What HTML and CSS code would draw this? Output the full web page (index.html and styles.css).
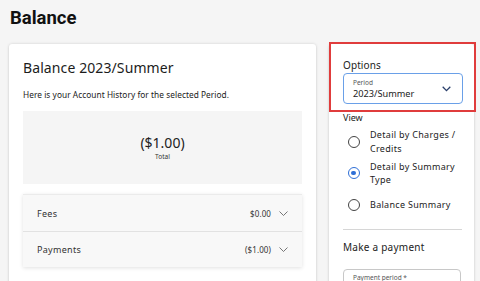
FILE: index.html
```html
<!DOCTYPE html>
<html>
<head>
<meta charset="utf-8">
<link rel="stylesheet" href="styles.css">
</head>
<body>
<h1 class="page-title">Balance</h1>
<div class="layout">
  <main class="card main-card">
    <h2 class="card-title">Balance 2023/Summer</h2>
    <p class="intro">Here is your Account History for the selected Period.</p>
    <div class="total-box">
      <div class="total-amount">($1.00)</div>
      <div class="total-label">Total</div>
    </div>
    <div class="accordion">
      <div class="acc-row">
        <span class="acc-name">Fees</span>
        <span class="acc-value">$0.00</span>
        <svg class="chev" width="9" height="5" viewBox="0 0 9 5"><path d="M0.5 0.5 L4.5 4.5 L8.5 0.5" fill="none" stroke="#666" stroke-width="0.9"/></svg>
      </div>
      <div class="acc-row">
        <span class="acc-name">Payments</span>
        <span class="acc-value">($1.00)</span>
        <svg class="chev" width="9" height="5" viewBox="0 0 9 5"><path d="M0.5 0.5 L4.5 4.5 L8.5 0.5" fill="none" stroke="#666" stroke-width="0.9"/></svg>
      </div>
    </div>
  </main>
  <aside class="card side-card">
    <section class="options">
      <h3 class="side-title">Options</h3>
      <div class="select">
        <div class="select-text">
          <span class="select-label">Period</span>
          <span class="select-value">2023/Summer</span>
        </div>
        <svg class="select-chev" width="9" height="6" viewBox="0 0 9 6"><path d="M0.7 0.8 L4.5 4.6 L8.3 0.8" fill="none" stroke="#2a3f6b" stroke-width="1.3"/></svg>
      </div>
    </section>
    <div class="view">
      <div class="view-label">View</div>
      <label class="radio-row"><span class="radio"></span><span class="radio-text">Detail by Charges / Credits</span></label>
      <label class="radio-row"><span class="radio checked"></span><span class="radio-text">Detail by Summary Type</span></label>
      <label class="radio-row"><span class="radio"></span><span class="radio-text">Balance Summary</span></label>
    </div>
    <hr class="divider">
    <h3 class="side-title pay-title">Make a payment</h3>
    <div class="input">
      <span class="input-label">Payment period *</span>
    </div>
  </aside>
</div>
</body>
</html>
```
FILE: styles.css
```css
* { box-sizing: border-box; }
html, body { margin: 0; padding: 0; }
body {
  background: #f5f5f5;
  font-family: "Noto Sans", "Open Sans", sans-serif;
  color: #222;
  width: 480px;
  height: 281px;
  overflow: hidden;
  padding: 7px 0 0 9px;
}
.page-title {
  font-family: Roboto, "Liberation Sans", sans-serif;
  font-weight: 700;
  font-size: 18.5px;
  line-height: 22px;
  margin: 0 0 15px 1px;
  color: #111;
}
.layout {
  display: flex;
  align-items: flex-start;
  gap: 13px;
}
.card {
  background: #fff;
  border-radius: 3px;
  box-shadow: 0 0 3px rgba(0,0,0,0.15), 0 1px 2px rgba(0,0,0,0.08);
  flex: none;
}
.main-card {
  width: 307px;
  height: 260px;
  padding: 14px 14px 0 14px;
}
.card-title {
  font-weight: 400;
  font-size: 14px;
  letter-spacing: 0.1px;
  line-height: 20px;
  margin: 0 0 11px 0;
  color: #1c1c1c;
}
.intro {
  font-size: 8.3px;
  letter-spacing: 0.05px;
  line-height: 12px;
  margin: 0 0 10px 0;
  color: #222;
}
.total-box {
  background: #f5f5f5;
  height: 73px;
  display: flex;
  flex-direction: column;
  align-items: center;
  justify-content: center;
  padding-bottom: 1px;
}
.total-amount {
  font-size: 14px;
  line-height: 18px;
  color: #222;
}
.total-label {
  font-size: 6.5px;
  line-height: 9px;
  color: #333;
}
.accordion {
  margin-top: 10px;
  background: #f8f8f8;
  box-shadow: 0 1px 4px rgba(0,0,0,0.12);
  border-top: 1px solid #ebebeb;
}
.acc-row {
  display: flex;
  align-items: center;
  height: 36px;
  padding: 0 14px 0 14px;
  font-size: 9px;
  letter-spacing: 0.3px;
  color: #333;
}
.acc-row + .acc-row { border-top: 1px solid #e2e2e2; }
.acc-name { flex: 1; }
.acc-value { font-size: 8px; margin-right: 8px; letter-spacing: 0.1px; }
.chev { display: block; }
.side-card {
  width: 145px;
  height: 260px;
}
.options {
  border: 2px solid #e03c3c;
  margin: -2px -2px 0 0;
  padding: 14px 12px 6px 12px;
  height: 70px;
}
.side-title {
  font-weight: 400;
  font-size: 10px;
  line-height: 14px;
  letter-spacing: 0.1px;
  margin: 0 0 1px 0;
  color: #222;
}
.select {
  border: 1.5px solid #6aa0e8;
  border-radius: 4px;
  height: 31px;
  width: 120px;
  display: flex;
  align-items: center;
  padding: 0 11px 0 9px;
}
.select-text { flex: 1; display: flex; flex-direction: column; }
.select-label { font-size: 6.5px; line-height: 9px; color: #555; }
.select-value { font-size: 9.2px; line-height: 13px; color: #222; }
.select-chev { display: block; }
.view { padding: 0 14px; }
.view-label { font-size: 9px; line-height: 12px; color: #222; }
.radio-row {
  display: flex;
  align-items: center;
  gap: 10px;
  padding-left: 5px;
  min-height: 31.5px;
}
.view-label + .radio-row { margin-top: 2px; }
.radio {
  width: 12px;
  height: 12px;
  border-radius: 50%;
  border: 1.3px solid #444;
  flex: none;
  position: relative;
}
.radio.checked { border-color: #2f6fd6; }
.radio.checked::after {
  content: "";
  position: absolute;
  left: 2.4px; top: 2.4px;
  width: 4.6px; height: 4.6px;
  border-radius: 50%;
  background: #2f6fd6;
}
.radio-text {
  font-size: 9px;
  line-height: 13.5px;
  letter-spacing: 0.3px;
  color: #222;
}
.divider {
  border: 0;
  border-top: 1px solid #d6d6d6;
  margin: 8px 12px 0 14px;
}
.pay-title { margin: 10px 14px 15px 14px; letter-spacing: 0.25px; }
.input {
  margin: 0 13px 0 14px;
  border: 1px solid #c8c8c8;
  border-radius: 4px;
  height: 30px;
  padding: 3px 9px;
}
.input-label { font-size: 6.5px; color: #555; display: block; line-height: 9px; }
```
